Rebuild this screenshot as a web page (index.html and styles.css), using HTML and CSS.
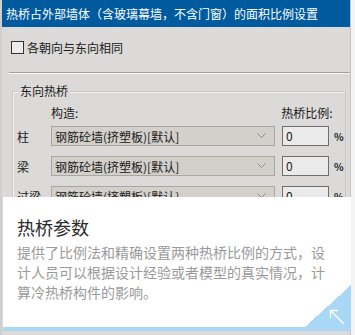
FILE: index.html
```html
<!DOCTYPE html>
<html lang="zh">
<head>
<meta charset="utf-8">
<link rel="stylesheet" href="styles.css">
</head>
<body>
<div class="window">
  <div class="titlebar">热桥占外部墙体（含玻璃幕墙，不含门窗）的面积比例设置</div>
  <label class="check-row"><span class="checkbox"></span><span>各朝向与东向相同</span></label>
  <div class="separator"></div>
  <div class="group">
    <div class="legend">东向热桥</div>
    <div class="head">
      <span class="head-construct">构造:</span>
      <span class="head-ratio">热桥比例:</span>
    </div>
    <div class="rows">
      <div class="row">
        <span class="row-label">柱</span>
        <div class="select"><span>钢筋砼墙(挤塑板)[默认]</span><svg class="chev" width="9" height="6" viewBox="0 0 9 6"><path d="M0.5 0.5 L4.5 4.5 L8.5 0.5" fill="none" stroke="#8a8a8a" stroke-width="1"/></svg></div>
        <div class="input">0</div>
        <span class="pct">%</span>
      </div>
      <div class="row">
        <span class="row-label">梁</span>
        <div class="select"><span>钢筋砼墙(挤塑板)[默认]</span><svg class="chev" width="9" height="6" viewBox="0 0 9 6"><path d="M0.5 0.5 L4.5 4.5 L8.5 0.5" fill="none" stroke="#8a8a8a" stroke-width="1"/></svg></div>
        <div class="input">0</div>
        <span class="pct">%</span>
      </div>
      <div class="row">
        <span class="row-label">过梁</span>
        <div class="select"><span>钢筋砼墙(挤塑板)[默认]</span><svg class="chev" width="9" height="6" viewBox="0 0 9 6"><path d="M0.5 0.5 L4.5 4.5 L8.5 0.5" fill="none" stroke="#8a8a8a" stroke-width="1"/></svg></div>
        <div class="input">0</div>
        <span class="pct">%</span>
      </div>
    </div>
  </div>
  <div class="tip">
    <div class="tip-title">热桥参数</div>
    <div class="tip-text">提供了比例法和精确设置两种热桥比例的方式，设计人员可以根据设计经验或者模型的真实情况，计算冷热桥构件的影响。</div>
    <div class="corner">
      <svg width="16" height="16" viewBox="0 0 16 16"><path d="M1.5 1.5 L15 15 M1.5 1.5 L1.5 9 M1.5 1.5 L9 1.5" fill="none" stroke="#ffffff" stroke-width="1.3"/></svg>
    </div>
  </div>
</div>
</body>
</html>
```
FILE: styles.css
```css
* { box-sizing: border-box; }
html, body { margin: 0; padding: 0; }
body {
  width: 355px;
  height: 335px;
  overflow: hidden;
  background: #f4f4f4;
  font-family: "Noto Sans CJK SC", "Noto Sans", sans-serif;
  font-size: 12px;
  color: #1a1a1a;
}
.window {
  position: relative;
  width: 351px;
  height: 335px;
  background: #dbdad8;
  border-left: 2px solid #cfcfcf;
  border-right: 1px solid #c4c4c4;
}
.titlebar {
  height: 27px;
  background: #005a9e;
  color: #ffffff;
  font-size: 12px;
  line-height: 27px;
  padding-left: 4px;
  white-space: nowrap;
}
.check-row {
  display: flex;
  align-items: center;
  gap: 3px;
  margin-top: 14px;
  padding-left: 9px;
  height: 13px;
  font-size: 12px;
}
.checkbox {
  width: 13px;
  height: 13px;
  background: #ececec;
  border: 1px solid #333333;
}
.separator {
  margin: 18px 0 0 7px;
  height: 2px;
  border-top: 1px solid #a0a0a0;
  border-bottom: 1px solid #f6f6f6;
}
.group {
  position: relative;
  margin: 17px 4px 0 10px;
  height: 140px;
  border: 1px solid #c8c8c8;
  box-shadow: inset 1px 1px 0 #f3f3f3;
  padding: 13px 0 0 4px;
}
.legend {
  position: absolute;
  top: -10px;
  left: 5px;
  background: #dbdad8;
  padding: 0 2px;
  font-size: 12px;
  line-height: 18px;
}
.head {
  display: flex;
  height: 16px;
  line-height: 16px;
  font-size: 12px;
}
.head-construct { margin-left: 34px; }
.head-ratio { margin-left: 203px; }
.rows {
  display: flex;
  flex-direction: column;
  gap: 10px;
  margin-top: 5px;
}
.row {
  display: flex;
  align-items: center;
  height: 20px;
}
.row-label {
  width: 34px;
  font-size: 12px;
}
.select {
  width: 224px;
  height: 20px;
  background: #d3d0cc;
  border: 1px solid #a9a7a4;
  display: flex;
  align-items: center;
  justify-content: space-between;
  padding: 0 8px 0 3px;
  font-size: 12px;
  white-space: nowrap;
}
.chev { display: block; }
.input {
  width: 47px;
  height: 20px;
  margin-left: 7px;
  background: #eaeaea;
  border: 1px solid #6e6e6e;
  padding-left: 3px;
  font-size: 12px;
  line-height: 18px;
}
.pct {
  margin-left: 5px;
  font-size: 10px;
  font-weight: bold;
}
.tip {
  position: absolute;
  left: 1px;
  top: 197px;
  width: 348px;
  height: 134px;
  background: #ffffff;
  border-bottom: 4px solid #a9d7f6;
  padding: 18px 0 0 14px;
  overflow: hidden;
}
.tip-title {
  font-size: 18px;
  line-height: 24px;
  color: #2a2a2a;
}
.tip-text {
  margin-top: 3px;
  width: 312px;
  font-size: 14px;
  line-height: 20px;
  color: #9a9a9a;
}
.corner {
  position: absolute;
  right: 0;
  bottom: 0;
  width: 46px;
  height: 42px;
  background: linear-gradient(to top left, #a9d7f6 50%, transparent 50%);
}
.corner svg {
  position: absolute;
  right: 6px;
  bottom: 2px;
}
```
